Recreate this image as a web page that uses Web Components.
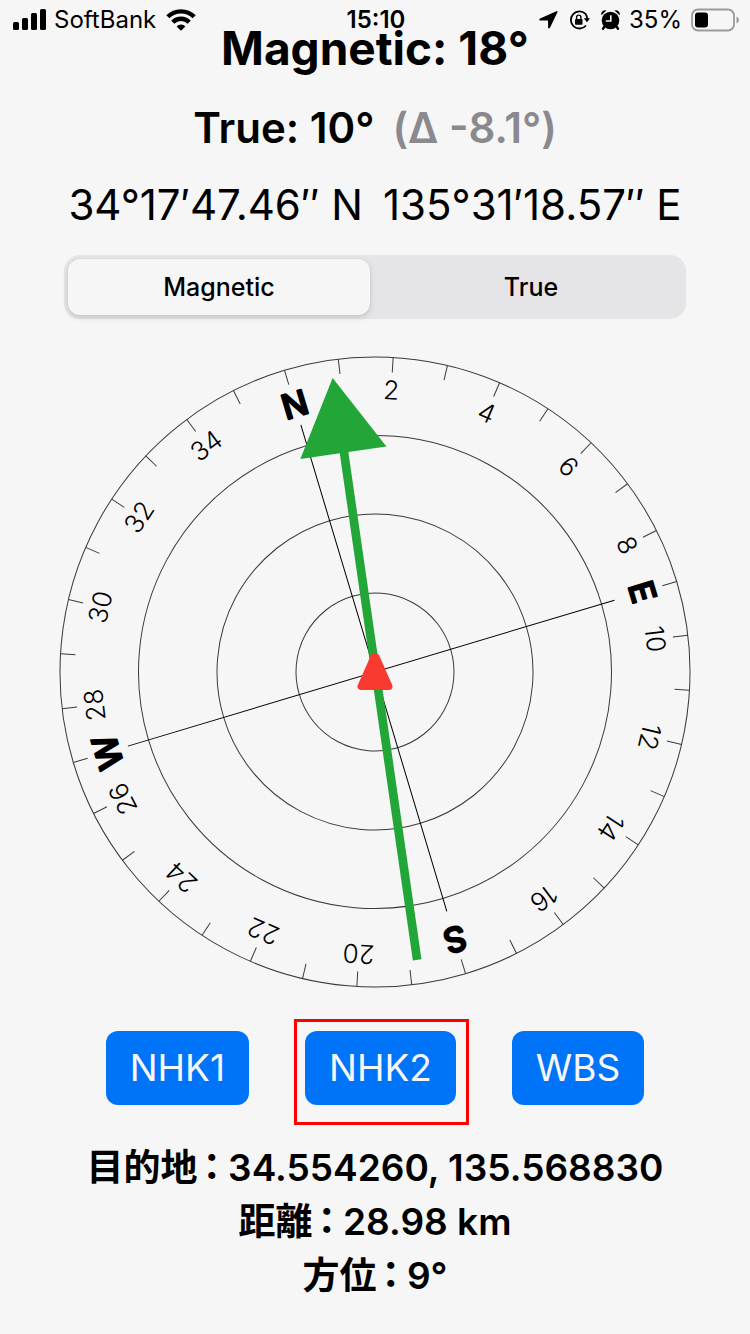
<!DOCTYPE html>
<html lang="ja">
<head>
<meta charset="utf-8">
<meta name="viewport" content="width=device-width, initial-scale=1">
<title>Compass</title>
<style>
  html { background: #f6f6f6; }
  body { margin: 0; color: #000; font-family: Inter, "Noto Sans CJK JP", sans-serif; }
</style>
</head>
<body>
<compass-app></compass-app>
<script>
class BaseElement extends HTMLElement {
  connectedCallback() {
    if (this.shadowRoot) return;
    this.attachShadow({ mode: 'open' }).innerHTML = this.render();
  }
}

class StatusBar extends BaseElement {
  render() {
    return `
    <style>
      :host { display: grid; grid-template-columns: 1fr auto 1fr; align-items: center; height: 40px; padding: 0 11px 0 13px; font-size: 24px; line-height: 40px; }
      .side { display: flex; align-items: center; }
      .end { justify-content: flex-end; }
      .time { font-weight: 600; }
      svg { display: block; flex: none; }
      .bars { margin-right: 8px; }
      .wifi { margin-left: 10px; }
      .loc, .lock { margin-right: 11px; }
      .alarm, .pct { margin-right: 9px; }
    </style>
    <div class="side">
      <svg class="bars" width="33" height="22" viewBox="0 0 33 22"><rect x="0" y="13" width="6" height="8" rx="1.5"/><rect x="9" y="9" width="6" height="12" rx="1.5"/><rect x="18" y="4" width="6" height="17" rx="1.5"/><rect x="27" y="0" width="6" height="21" rx="1.5"/></svg>
      <span>SoftBank</span>
      <svg class="wifi" width="30" height="22" viewBox="0 0 30 22"><g fill="none" stroke="#000" stroke-width="4.4"><path d="M1.800 7.800a18.700 18.700 0 0 1 26.400 0"/><path d="M6.800 13.200a11.600 11.600 0 0 1 16.400 0"/></g><path d="M15 21.800l-4.400-4.400a6.200 6.200 0 0 1 8.800 0z"/></svg>
    </div>
    <span class="time">15:10</span>
    <div class="side end">
      <svg class="loc" width="19" height="18" viewBox="0 0 19 18"><path d="M17.400.2c.8-.3 1.400.2 1 1.100L11 16.700c-.5 1-1.900.8-1.900-.3L9 9.600H1.600C.1 9.600-.1 8.200 1.100 7.600z"/></svg>
      <svg class="lock" width="21" height="20" viewBox="0 0 21 20"><path d="M16.500 3.800A8.600 8.600 0 1 0 17 15.500M16.500 3.800A8.600 8.600 0 0 1 18.200 9" fill="none" stroke="#000" stroke-width="1.800"/><path d="M14.800 8.300h6.200l-3 4z"/><rect x="6" y="9" width="7.500" height="5.800" rx=".8"/><path d="M7.600 9.500V7.300a2.150 2.150 0 0 1 4.300 0v2.200" fill="none" stroke="#000" stroke-width="1.400"/></svg>
      <svg class="alarm" width="19" height="20" viewBox="0 0 19 20"><circle cx="9.500" cy="10.500" r="8.800"/><path d="M.3 5.200A4 4 0 0 1 5.500.5zM18.700 5.200A4 4 0 0 0 13.500.5z"/><path d="M3.500 16.500L2 18.700M15.500 16.500l1.500 2.200" stroke="#000" stroke-width="2.400" stroke-linecap="round"/><path d="M9.800 5.200v5.800H4.800" fill="none" stroke="#f6f6f6" stroke-width="1.600"/></svg>
      <span class="pct">35%</span>
      <svg width="48" height="24" viewBox="0 0 48 24"><rect x="1" y="1.500" width="42" height="21" rx="6" fill="none" stroke="#9b9b9b" stroke-width="1.800"/><rect x="4" y="4.500" width="13" height="15" rx="3"/><path d="M45.500 8.500q2.500 1 2.500 3.500t-2.500 3.500z" fill="#9b9b9b"/></svg>
    </div>`;
  }
}

class HeadingReadout extends BaseElement {
  render() {
    return `
    <style>
      :host { display: flex; flex-direction: column; align-items: center; white-space: pre; line-height: 60px; font-size: 42px; }
      h1, h2, p { margin: 0; }
      h1 { font-size: 46px; font-weight: 700; margin-bottom: 20px; }
      h2 { font-size: 42px; font-weight: 600; margin-bottom: 17px; }
      .delta { color: #8a8a8e; margin-left: 18px; }
      p { display: flex; gap: 20px; }
    </style>
    <h1><slot name="magnetic"></slot></h1>
    <h2><slot name="true"></slot><span class="delta"><slot name="delta"></slot></span></h2>
    <p><slot name="lat"></slot><slot name="lon"></slot></p>`;
  }
}

class ModeSwitch extends BaseElement {
  render() {
    return `
    <style>
      :host { display: block; }
      fieldset { display: grid; grid-template-columns: 1fr 1fr; gap: 10px; margin: 0; padding: 4px; border: 0; border-radius: 16px; background: #e5e5e7; }
      label { display: grid; place-items: center; height: 56px; border-radius: 12px; font-size: 25px; font-weight: 500; position: relative; }
      input { position: absolute; inset: 0; margin: 0; opacity: 0; }
      label:has(:checked) { background: #f6f6f6; box-shadow: 0 3px 6px rgba(0,0,0,.12), 0 0 2px rgba(0,0,0,.1); }
    </style>
    <fieldset aria-label="North reference">
      <label><input type="radio" name="north" checked>Magnetic</label>
      <label><input type="radio" name="north">True</label>
    </fieldset>`;
  }
}

class CompassDial extends BaseElement {
  render() {
    const rotation = Number(this.getAttribute('rotation'));
    const bearing = Number(this.getAttribute('bearing'));
    let ticks = '', labels = '';
    for (let n = 0; n < 36; n++) {
      ticks += `<path d="M0-315V-300" transform="rotate(${n * 10})"/>`;
      if (n % 2 === 0 && n > 0 && n !== 18) {
        labels += `<text y="-273" transform="rotate(${n * 10})">${n}</text>`;
      }
    }
    const cardinals = ['N', 'E', 'S', 'W'].map((c, i) =>
      `<text class="cardinal" y="-267" transform="rotate(${i * 90})">${c}</text>`).join('');
    return `
    <style>
      :host { display: block; }
      svg { display: block; width: 100%; height: auto; }
      text { text-anchor: middle; font-size: 26px; font-weight: 300; }
      .cardinal { font-size: 34px; font-weight: 500; stroke: #000; stroke-width: 2; stroke-linejoin: round; }
    </style>
    <svg viewBox="-316 -316 632 632" role="img" aria-label="Compass dial">
      <g transform="rotate(${rotation})">
        <g fill="none" stroke="#3a3a3a">
          <circle r="315"/><circle r="236.500"/><circle r="158"/><circle r="79"/>
          ${ticks}
          <path d="M0-258V250M-258 0H250" stroke="#000"/>
        </g>
        ${labels}${cardinals}
      </g>
      <g transform="rotate(${bearing})" fill="#21a637">
        <path d="M0-297L43.500-221.500H5V291H-3.700V-221.500H-43.500z"/>
      </g>
      <path d="M-1-15L-14 14.500H14L1-15z" fill="#f93a30" stroke="#f93a30" stroke-width="7" stroke-linejoin="round"/>
    </svg>`;
  }
}

class StationButton extends BaseElement {
  render() {
    return `
    <style>
      :host { display: block; position: relative; }
      button { display: block; height: 74px; margin: 0; padding: 0 24px; border: 0; border-radius: 12px; background: #0074f8; color: #f6f6f6; font: 400 37px/74px Inter, sans-serif; }
      :host([marked])::after { content: ""; position: absolute; inset: -12px -13px -20px -11px; border: 3px solid #f00; pointer-events: none; }
    </style>
    <button type="button"><slot></slot></button>`;
  }
}

class TargetInfo extends BaseElement {
  render() {
    return `
    <style>
      :host { display: block; font-size: 37px; font-weight: 600; line-height: 54px; }
      dl { margin: 0; }
      div { display: flex; justify-content: center; }
      dt { font-feature-settings: "halt"; }
      dt span { padding: 0 7px 0 5px; }
      dd { margin: 0; }
    </style>
    <dl>
      <div><dt>目的地<span>：</span></dt><dd>34.554260, 135.568830</dd></div>
      <div><dt>距離<span>：</span></dt><dd>28.98 km</dd></div>
      <div><dt>方位<span>：</span></dt><dd>9°</dd></div>
    </dl>`;
  }
}

class CompassApp extends BaseElement {
  render() {
    return `
    <style>
      :host { display: block; position: relative; }
      /* The status bar floats above the scrolled content. */
      status-bar { position: absolute; top: 0; left: 0; right: 0; }
      main { display: flex; flex-direction: column; padding: 18px 0; }
      mode-switch { margin: 20px 64px 37px; }
      compass-dial { margin: 0 59px 43px; }
      nav { display: flex; justify-content: center; gap: 56px; margin-bottom: 36px; }
    </style>
    <status-bar></status-bar>
    <main>
      <heading-readout>
        <span slot="magnetic">Magnetic: 18°</span>
        <span slot="true">True: 10°</span>
        <span slot="delta">(Δ -8.1°)</span>
        <span slot="lat">34°17′47.46″ N</span>
        <span slot="lon">135°31′18.57″ E</span>
      </heading-readout>
      <mode-switch></mode-switch>
      <compass-dial rotation="-16.7" bearing="-8.2"></compass-dial>
      <nav aria-label="Stations">
        <station-button>NHK1</station-button>
        <station-button marked>NHK2</station-button>
        <station-button>WBS</station-button>
      </nav>
      <target-info></target-info>
    </main>`;
  }
}

customElements.define('status-bar', StatusBar);
customElements.define('heading-readout', HeadingReadout);
customElements.define('mode-switch', ModeSwitch);
customElements.define('compass-dial', CompassDial);
customElements.define('station-button', StationButton);
customElements.define('target-info', TargetInfo);
customElements.define('compass-app', CompassApp);
</script>
</body>
</html>
